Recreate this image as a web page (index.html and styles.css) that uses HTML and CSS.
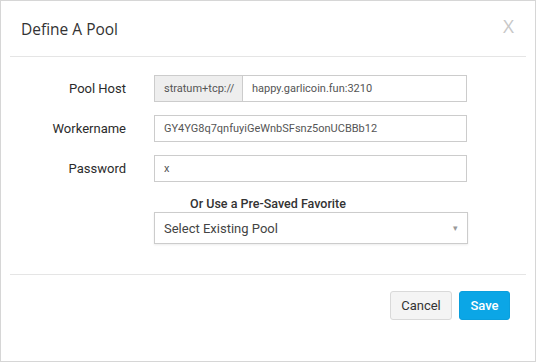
FILE: index.html
```html
<!DOCTYPE html>
<html lang="en">
<head>
  <meta charset="UTF-8" />
  <title>Define A Pool</title>
  <link rel="stylesheet" href="styles.css">
</head>
<body>
  <div class="modal">
    <div class="modal-header">
      <h4 class="modal-title">Define A Pool</h4>
      <span class="close">X</span>
    </div>

    <div class="modal-body">
      <div class="form-row">
        <label for="poolHost">Pool Host</label>
        <div class="input-group">
          <span class="addon">stratum+tcp://</span>
          <input type="text" id="poolHost" value="happy.garlicoin.fun:3210">
        </div>
      </div>
      <div class="form-row">
        <label for="worker">Workername</label>
        <input type="text" id="worker" value="GY4YG8q7qnfuyiGeWnbSFsnz5onUCBBb12">
      </div>
      <div class="form-row">
        <label for="password">Password</label>
        <input type="text" id="password" value="x">
      </div>

      <div class="favorite-title">Or Use a Pre-Saved Favorite</div>
      <div class="form-row">
        <span></span>
        <div class="select-box">
          <span>Select Existing Pool</span>
          <span class="arrow">&#9662;</span>
        </div>
      </div>
    </div>

    <div class="modal-footer">
      <button class="btn btn-default">Cancel</button>
      <button class="btn btn-primary">Save</button>
    </div>
  </div>
</body>
</html>
```

FILE: styles.css
```css
body {
  margin: 0;
  font-family: Roboto, "Liberation Sans", sans-serif;
  color: #333;
  background: #fff;
}
.modal {
  width: 536px;
  height: 362px;
  box-sizing: border-box;
  border: 1px solid #d6d6d6;
  background: #fff;
  display: flex;
  flex-direction: column;
}
.modal-header {
  margin: 0 9px;
  height: 55px;
  border-bottom: 1px solid #e5e5e5;
  display: flex;
  align-items: center;
  justify-content: space-between;
  padding: 0 11px;
}
.modal-title {
  margin: 0;
  font-family: "Open Sans", sans-serif;
  font-weight: normal;
  font-size: 15.5px;
  color: #333;
}
.close {
  font-family: "Open Sans", sans-serif;
  font-size: 19px;
  color: #c8c8c8;
  margin-top: -6px;
  margin-right: 1px;
}
.modal-body {
  padding: 18px 0 0 9px;
  flex: 1;
}
.form-row {
  display: grid;
  grid-template-columns: 116px 313px;
  column-gap: 28px;
  align-items: center;
  margin-bottom: 13px;
}
.form-row label {
  text-align: right;
  font-size: 13px;
  color: #2b2b2b;
}
.form-row input {
  height: 27px;
  box-sizing: border-box;
  border: 1px solid #ccc;
  padding: 0 9px;
  font-family: Roboto, sans-serif;
  font-size: 11px;
  color: #555;
  width: 100%;
  outline: none;
}
.input-group {
  display: flex;
}
.addon {
  height: 27px;
  box-sizing: border-box;
  background: #eee;
  border: 1px solid #ccc;
  border-right: none;
  padding: 0 9px;
  font-size: 11px;
  color: #555;
  display: flex;
  align-items: center;
  width: 88px;
}
.input-group input {
  flex: 1;
}
.favorite-title {
  text-align: center;
  font-size: 12.5px;
  font-weight: 500;
  color: #333;
  margin: 14px 0 0 -9px;
  line-height: 16px;
}
.select-box {
  height: 32px;
  box-sizing: border-box;
  border: 1px solid #ccc;
  box-shadow: 0 1px 2px rgba(0, 0, 0, 0.08);
  display: flex;
  align-items: center;
  justify-content: space-between;
  padding: 0 9px;
  font-size: 13px;
  color: #444;
  width: 314px;
}
.arrow {
  font-size: 9px;
  color: #999;
}
.modal-footer {
  margin: 0 9px;
  border-top: 1px solid #e5e5e5;
  height: 70px;
  display: flex;
  justify-content: flex-end;
  align-items: flex-start;
  gap: 7px;
  padding: 16px 16px 0 0;
}
.btn {
  height: 29px;
  padding: 0;
  font-family: Roboto, sans-serif;
  font-size: 13px;
  border-radius: 3px;
  cursor: pointer;
}
.btn-default {
  width: 62px;
  background: #f4f4f4;
  border: 1px solid #d9d9d9;
  color: #333;
}
.btn-primary {
  width: 51px;
  background: #0ba6e6;
  border: 1px solid #0a9fdd;
  color: #fff;
  font-weight: 500;
}
```
